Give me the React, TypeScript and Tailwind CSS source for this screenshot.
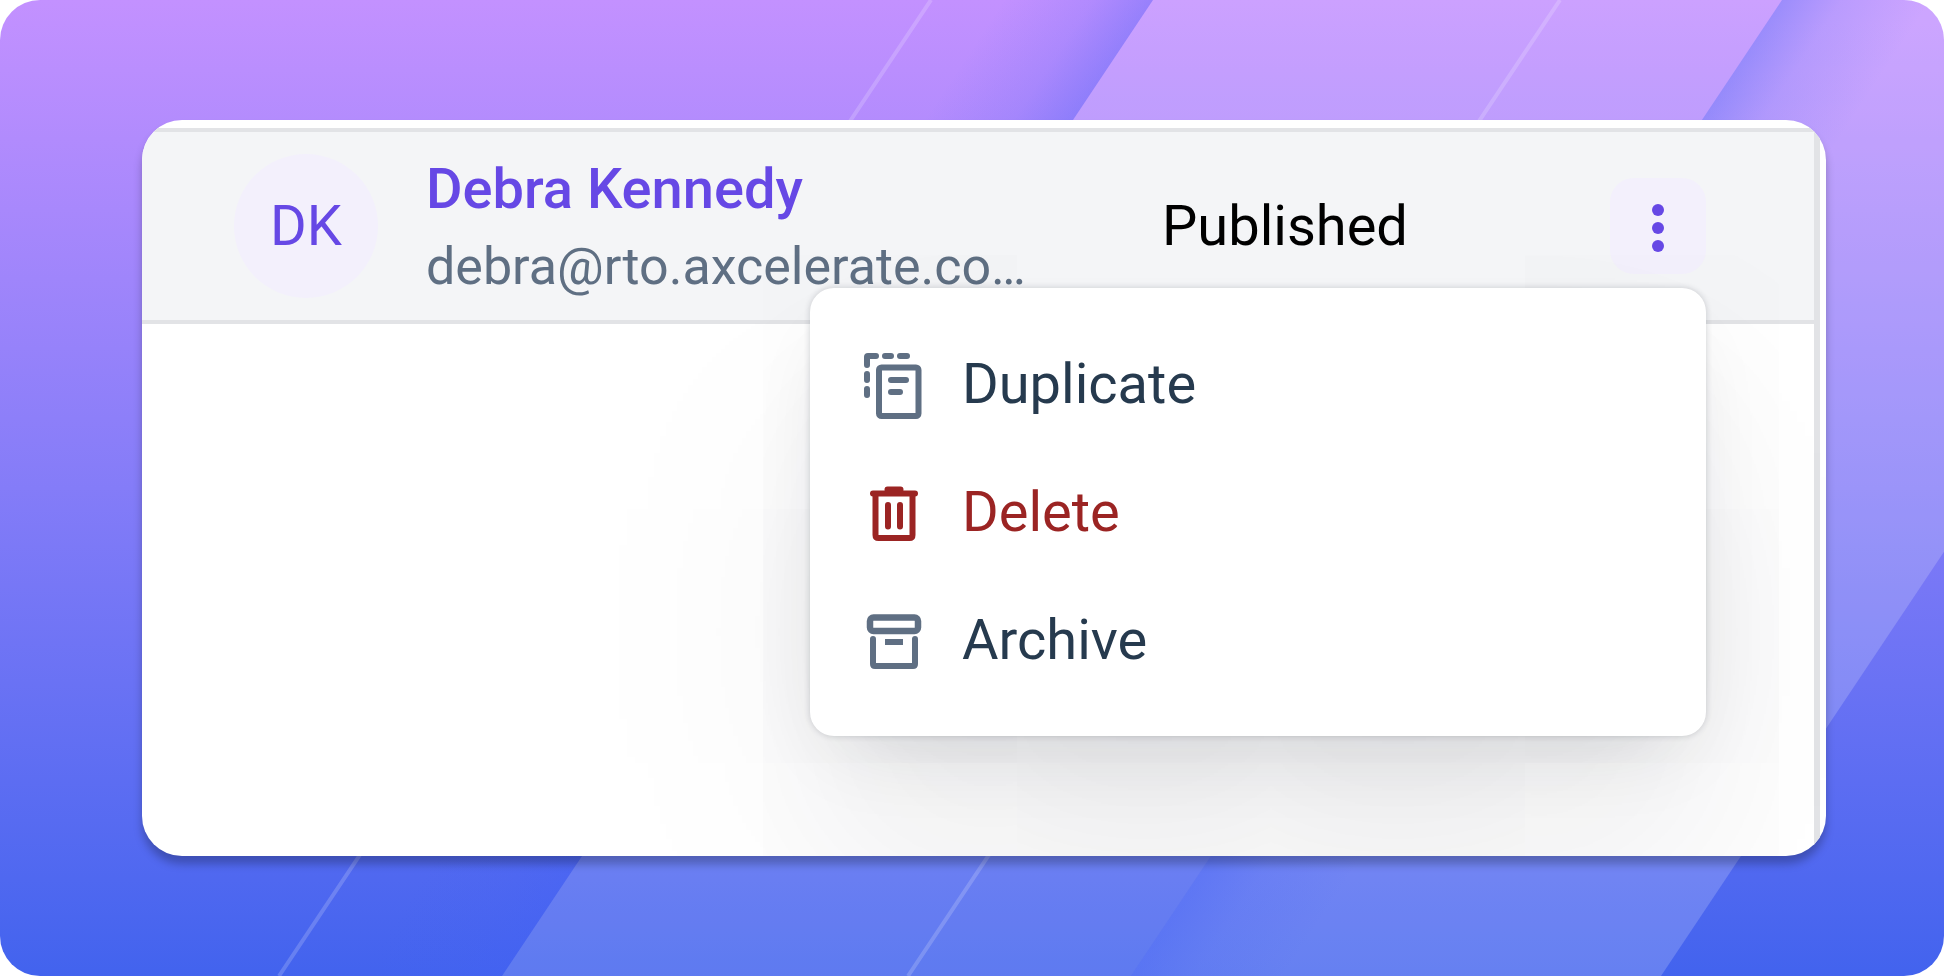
import React from "react";

const MENU_ITEMS = [
  { label: "Duplicate", icon: DuplicateIcon, color: "text-[#263a4e]", iconColor: "text-[#5f6f83]" },
  { label: "Delete", icon: TrashIcon, color: "text-[#9b2423]", iconColor: "text-[#9b2423]" },
  { label: "Archive", icon: ArchiveIcon, color: "text-[#263a4e]", iconColor: "text-[#5f6f83]" },
];

function DuplicateIcon() {
  return (
    <svg viewBox="0 0 72 72" fill="none" stroke="currentColor" strokeWidth="6" className="size-[72px]" aria-hidden="true">
      <rect x="21" y="19.5" width="39.5" height="48.5" rx="2.5" />
      <path d="M33 32h15M33 44h9" strokeLinecap="round" />
      <path d="M9 17V9q0-1 1-1h8M27 8h6M42 8h7M9 26v6M9 41v6" strokeLinecap="round" />
    </svg>
  );
}

function TrashIcon() {
  return (
    <svg viewBox="0 0 72 72" fill="none" stroke="currentColor" strokeWidth="6" className="size-[72px]" aria-hidden="true">
      <path d="M15 17.5h42M29.5 13.5h13" strokeLinecap="round" />
      <path d="M17.5 18v41q0 3 3 3h31q3 0 3-3V18" />
      <path d="M30 29v21.5M42 29v21.5" strokeLinecap="round" />
    </svg>
  );
}

function ArchiveIcon() {
  return (
    <svg viewBox="0 0 72 72" fill="none" stroke="currentColor" strokeWidth="6" className="size-[72px]" aria-hidden="true">
      <rect x="12" y="13.5" width="48" height="13.5" rx="3.5" strokeWidth="6.5" />
      <path d="M15 35v25q0 2 2 2h38q2 0 2-2V35" strokeLinecap="round" />
      <path d="M27 38h18" />
    </svg>
  );
}

function Stripes() {
  return (
    <svg
      viewBox="0 0 1944 976"
      preserveAspectRatio="none"
      className="absolute inset-0 size-full"
      aria-hidden="true"
    >
      <defs>
        <linearGradient id="shadow-left" gradientUnits="userSpaceOnUse" x1="1153" y1="0" x2="1049" y2="-69">
          <stop offset="0" stopColor="#4361f6" stopOpacity="0.34" />
          <stop offset="0.4" stopColor="#4361f6" stopOpacity="0.14" />
          <stop offset="1" stopColor="#4361f6" stopOpacity="0" />
        </linearGradient>
        <linearGradient id="shadow-right" gradientUnits="userSpaceOnUse" x1="1782" y1="0" x2="1886" y2="69">
          <stop offset="0" stopColor="#4361f6" stopOpacity="0.36" />
          <stop offset="0.4" stopColor="#4361f6" stopOpacity="0.14" />
          <stop offset="1" stopColor="#4361f6" stopOpacity="0" />
        </linearGradient>
      </defs>
      <polygon points="973,0 1153,0 502,976 322,976" fill="url(#shadow-left)" />
      <polygon points="1153,0 1782,0 1131,976 502,976" fill="#fff" fillOpacity="0.15" />
      <polygon points="1782,0 2312,0 1661,976 1131,976" fill="#fff" fillOpacity="0.19" />
      <polygon points="1782,0 1962,0 1311,976 1131,976" fill="url(#shadow-right)" />
      <path d="M931 0L279 976M1560 0L908 976" stroke="#fff" strokeOpacity="0.18" strokeWidth="4" />
    </svg>
  );
}

export default function App() {
  return (
    <main className="relative flex min-h-screen overflow-hidden rounded-[40px] bg-[linear-gradient(180deg,#c391ff_0%,#847cf8_50%,#4263ee_100%)] py-[120px] pr-[118px] pl-[142px] font-[Roboto,sans-serif] text-[56px] leading-[64px]">
      <Stripes />
      <section className="relative flex flex-1 overflow-hidden rounded-[40px] bg-white pt-2 pr-[6px] shadow-[0_8px_8px_rgba(0,0,0,0.25)]">
        <div className="flex-1 border-t-4 border-r-[6px] border-[#e2e3e6]">
          <div className="flex h-[192px] items-center border-b-4 border-[#e2e3e6] bg-[#f4f5f7] pr-[108px] pl-[92px]">
            <div className="flex size-36 shrink-0 items-center justify-center rounded-full bg-[#f3f0fc] text-[#6648e5]">
              DK
            </div>
            <div className="ml-12 w-[736px] pt-1">
              <div className="h-[78px] font-medium text-[#6648e5]">
                <a href="#debra">Debra Kennedy</a>
              </div>
              <div className="text-[52px] text-[#5f6f83]">debra@rto.axcelerate.co…</div>
            </div>
            <div className="text-black">Published</div>
            <div className="relative ml-auto">
              <button
                type="button"
                aria-label="More actions"
                aria-expanded="true"
                className="flex size-24 items-center justify-center rounded-3xl bg-[#f3f0fc] text-[#6648e5]"
              >
                <svg viewBox="0 0 72 72" fill="currentColor" className="size-[72px]" aria-hidden="true">
                  <circle cx="36" cy="20" r="6" />
                  <circle cx="36" cy="38" r="6" />
                  <circle cx="36" cy="56" r="6" />
                </svg>
              </button>
              <div
                role="menu"
                className="absolute top-full right-0 z-10 mt-[14px] w-[896px] rounded-3xl bg-white py-8 shadow-[0_0_6px_rgba(30,35,50,0.2),0_36px_80px_-32px_rgba(30,35,50,0.14),0_120px_320px_-24px_rgba(20,25,35,0.13)]"
              >
                {MENU_ITEMS.map(({ label, icon: Icon, color, iconColor }) => (
                  <button
                    key={label}
                    type="button"
                    role="menuitem"
                    className="flex h-32 w-full items-center gap-8 px-12 text-left"
                  >
                    <span className={iconColor}>
                      <Icon />
                    </span>
                    <span className={color}>{label}</span>
                  </button>
                ))}
              </div>
            </div>
          </div>
        </div>
      </section>
    </main>
  );
}
